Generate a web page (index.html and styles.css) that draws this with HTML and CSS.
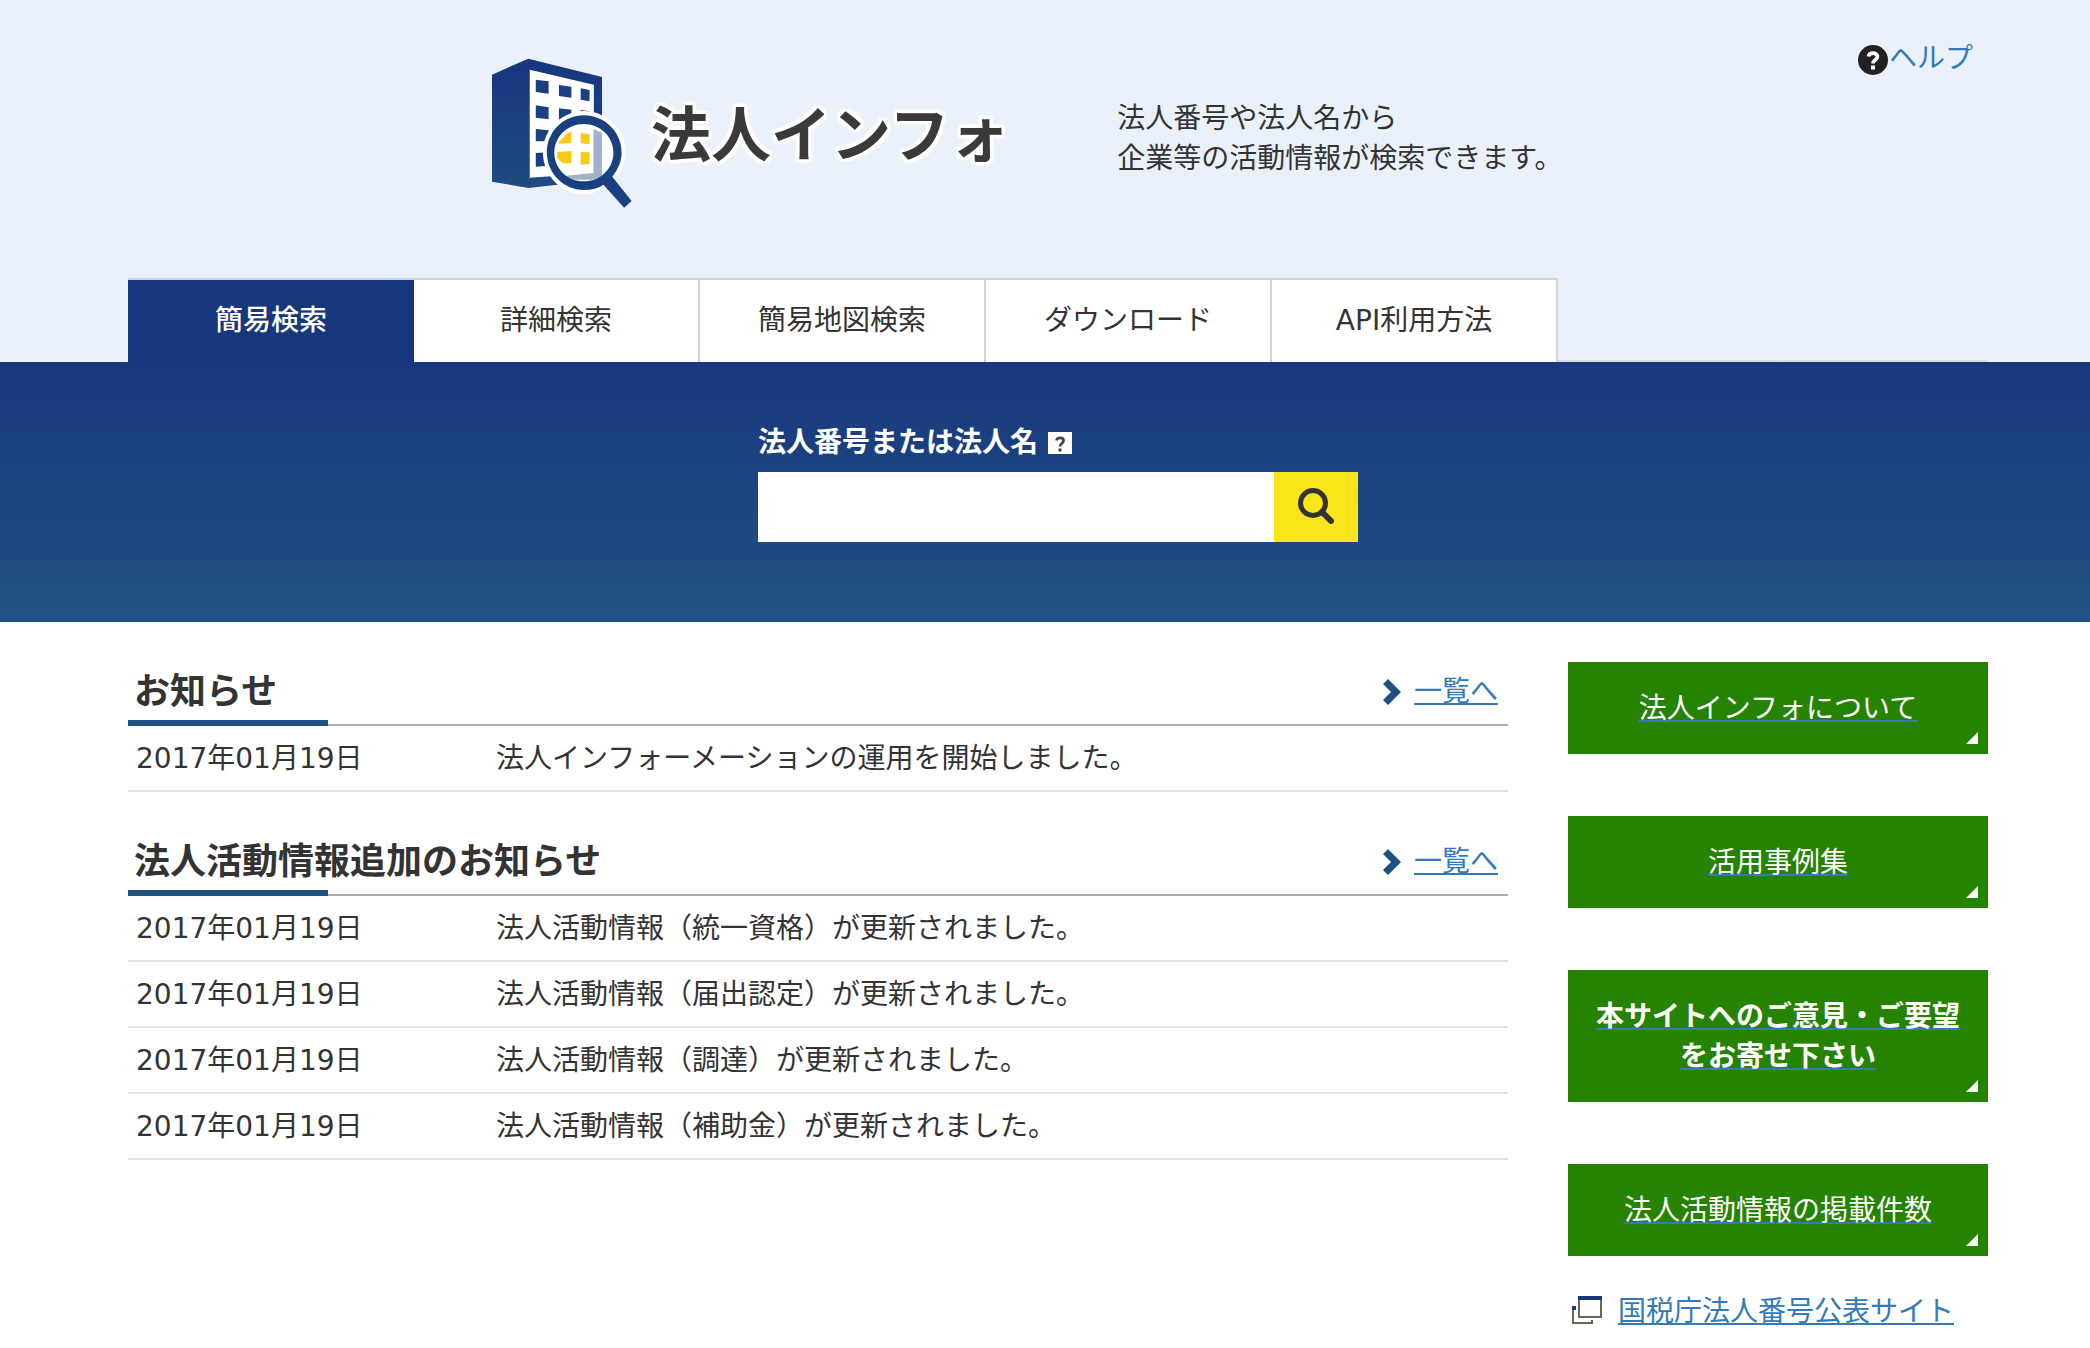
FILE: index.html
```html
<!DOCTYPE html>
<html lang="ja">
<head>
<meta charset="utf-8">
<meta name="viewport" content="width=device-width, initial-scale=1">
<title>法人インフォ</title>
<link rel="stylesheet" href="styles.css">
</head>
<body>
<header class="site-header">
  <div class="header-top">
    <a class="logo" href="#">
      <svg class="logo-mark" viewBox="62 52 396 456" preserveAspectRatio="none" aria-hidden="true">
        <defs>
          <linearGradient id="navy" x1="0" y1="0" x2="0" y2="1">
            <stop offset="0.1" stop-color="#18377f"/>
            <stop offset="1" stop-color="#1d4c80"/>
          </linearGradient>
          <clipPath id="lens"><ellipse cx="320" cy="339" rx="84" ry="86"/></clipPath>
        </defs>
        <path fill="url(#navy)" d="M62 105 L164 57 L371 112 V420 L164 445 L62 426 Z"/>
        <path fill="#fff" d="M168 90 L348 135 V401 L168 414 Z"/>
        <g fill="#1a407f">
          <path d="M185 120 L221 125 V162 L185 157 Z"/>
          <path d="M250 136 L285 141 V174 L250 169 Z"/>
          <path d="M311 146 L336 151 V185 L311 180 Z"/>
          <path d="M185 197 L221 203 V239 L185 234 Z"/>
          <path d="M250 206 L285 210 V244 L250 239 Z"/>
          <path d="M311 211 L336 215 V250 L311 246 Z"/>
          <path d="M185 268 L221 272 V305 L185 305 Z"/>
          <path d="M185 340 L221 338 V378 L185 381 Z"/>
        </g>
        <path fill="#fff" d="M320 214 C382 214 437 268 437 338 C437 368 428 392 412 410 L402 424 L374 444 C358 456 340 464 320 464 C258 464 205 410 205 338 C205 268 260 214 320 214 Z"/>
        <path fill="#eaf1fb" d="M372 445 L420 414 L450 460 L400 480 Z"/>
        <g clip-path="url(#lens)">
          <path fill="#a3b2ca" d="M347 268 L371 280 V420 H270 V408 L347 400 Z"/>
          <path fill="#f9cb15" d="M250 306 L275 280 L285 276 V310 L250 312 Z M311 280 L336 284 V314 L311 311 Z M245 337 L285 334 V371 L260 371 L245 355 Z M311 337 L336 338 V373 L311 375 Z"/>
        </g>
        <path fill="#1a407f" fill-rule="evenodd" d="M320 227 C378 227 426 277 426 338 C426 366 416 389 400 411 L454 484 L433 504 L375 435 C360 446 341 451 320 451 C262 451 216 400 216 338 C216 277 262 227 320 227 Z M320 253 C274 253 237 291 237 339 C237 387 274 425 320 425 C366 425 403 387 403 339 C403 291 366 253 320 253 Z"/>
      </svg>
      <span class="logo-text">法人インフォ</span>
    </a>
    <p class="tagline">法人番号や法人名から<br>企業等の活動情報が検索できます。</p>
    <a class="help" href="#">
      <svg class="help-icon" viewBox="0 0 30 30" aria-hidden="true">
        <circle cx="15" cy="15" r="15" fill="#222"/>
        <path d="M10.500 11.500 C11 7 19.500 7 19.500 11.500 C19.500 15 15 14.500 15 18.500" fill="none" stroke="#fff" stroke-width="3.600"/>
        <rect x="13" y="20.500" width="4" height="4" fill="#fff"/>
      </svg><span>ヘルプ</span>
    </a>
  </div>
  <nav class="tabs" aria-label="メニュー">
    <a class="tab tab-current" href="#" aria-current="page">簡易検索</a>
    <a class="tab" href="#">詳細検索</a>
    <a class="tab" href="#">簡易地図検索</a>
    <a class="tab" href="#">ダウンロード</a>
    <a class="tab" href="#">API利用方法</a>
  </nav>
</header>

<section class="hero">
  <form class="search">
    <div class="search-label">
      <label for="keyword">法人番号または法人名</label>
      <svg class="hint-icon" viewBox="0 0 24 22" aria-hidden="true">
        <rect width="24" height="22" fill="#fff"/>
        <path d="M8.500 8.500 C9 5 15.500 5 15.500 8.500 C15.500 11.500 12 11 12 14.500" fill="none" stroke="#444" stroke-width="2.800"/>
        <rect x="10.500" y="16.500" width="3" height="3" fill="#444"/>
      </svg>
    </div>
    <div class="search-box">
      <input class="search-input" id="keyword" type="text">
      <button class="search-button" type="submit" aria-label="検索">
        <svg class="search-icon" viewBox="0 0 36 36" aria-hidden="true">
          <circle cx="15" cy="15" r="12.500" fill="none" stroke="#333" stroke-width="5"/>
          <path d="M24 24 L33 33" stroke="#333" stroke-width="6" stroke-linecap="round"/>
        </svg>
      </button>
    </div>
  </form>
</section>

<main class="content">
  <div class="news">
    <section>
      <div class="section-head">
        <h2>お知らせ</h2>
        <a class="more" href="#">
          <svg class="chevron" viewBox="0 0 18 26" aria-hidden="true"><path fill="#1f5082" d="M5 0 L18 13 L5 26 L0 21 L8 13 L0 5 Z"/></svg>
          <span class="underlined">一覧へ</span>
        </a>
      </div>
      <table class="news-table">
        <tr><td class="date">2017年01月19日</td><td>法人インフォーメーションの運用を開始しました。</td></tr>
      </table>
    </section>
    <section>
      <div class="section-head">
        <h2>法人活動情報追加のお知らせ</h2>
        <a class="more" href="#">
          <svg class="chevron" viewBox="0 0 18 26" aria-hidden="true"><path fill="#1f5082" d="M5 0 L18 13 L5 26 L0 21 L8 13 L0 5 Z"/></svg>
          <span class="underlined">一覧へ</span>
        </a>
      </div>
      <table class="news-table">
        <tr><td class="date">2017年01月19日</td><td>法人活動情報（統一資格）が更新されました。</td></tr>
        <tr><td class="date">2017年01月19日</td><td>法人活動情報（届出認定）が更新されました。</td></tr>
        <tr><td class="date">2017年01月19日</td><td>法人活動情報（調達）が更新されました。</td></tr>
        <tr><td class="date">2017年01月19日</td><td>法人活動情報（補助金）が更新されました。</td></tr>
      </table>
    </section>
  </div>

  <aside class="side">
    <div class="side-buttons">
      <a class="side-button" href="#">法人インフォについて</a>
      <a class="side-button" href="#">活用事例集</a>
      <a class="side-button side-button-strong" href="#">本サイトへのご意見・ご要望<br>をお寄せ下さい</a>
      <a class="side-button" href="#">法人活動情報の掲載件数</a>
    </div>
    <a class="external" href="#">
      <svg class="external-icon" viewBox="0 0 30 28" aria-hidden="true">
        <path fill="none" stroke="#6b6558" stroke-width="2" d="M1 12 V27 H20 V24 M7 3 V21 H29 V3"/>
        <path fill="#18377f" d="M6 0 H30 V4 H6 Z M0 10 H4 V14 H0 Z"/>
      </svg>
      <span class="underlined">国税庁法人番号公表サイト</span>
    </a>
  </aside>
</main>
</body>
</html>
```
FILE: styles.css
```css
* {
  box-sizing: border-box;
}

body {
  margin: 0;
  background: #fff;
  color: #333;
  font-family: Verdana, "DejaVu Sans", "Noto Sans CJK JP", sans-serif;
  font-size: 28px;
  line-height: 40px;
}

h2,
p {
  margin: 0;
}

a {
  color: #337ab7;
  text-decoration: none;
}

svg {
  display: block;
  flex: none;
}

.underlined {
  text-decoration: underline;
  text-decoration-thickness: 2px;
  text-decoration-skip-ink: none;
  text-underline-offset: 2px;
}

/* Header */
.site-header {
  padding: 37px 102px 0 128px;
  background: #eaf1fb;
}

.header-top {
  display: flex;
  align-items: flex-start;
  padding: 0 15px 69px 364px;
}

.logo {
  display: flex;
  align-items: center;
  gap: 18px;
  margin-top: 20px;
}

.logo-mark {
  width: 141px;
  height: 152px;
}

.logo-text {
  padding-top: 6px;
  color: #3a3a3a;
  font-size: 60px;
  font-weight: 700;
  line-height: 80px;
  white-space: nowrap;
  text-shadow: 3px 0 2px #fff, -3px 0 2px #fff, 0 3px 2px #fff, 0 -3px 2px #fff,
    3px 3px 2px #fff, -3px 3px 2px #fff, 3px -3px 2px #fff, -3px -3px 2px #fff;
}

.tagline {
  margin: 62px 0 0 108px;
}

.help {
  display: flex;
  align-items: flex-end;
  gap: 1px;
  margin: 2px 0 0 auto;
  white-space: nowrap;
}

.help-icon {
  width: 30px;
  height: 30px;
  margin-bottom: 4px;
}

.tabs {
  display: flex;
}

.tabs::after {
  content: "";
  flex: 1;
  border-bottom: 2px solid #ddd;
}

.tab {
  width: 286px;
  padding: 21px 0;
  border-top: 2px solid #d0d2e0;
  border-right: 2px solid #d0d2e0;
  background: #fff;
  color: #333;
  text-align: center;
}

.tab-current {
  border-right: 0;
  background: #17377d;
  color: #fff;
  font-weight: 500;
}

/* Search */
.hero {
  padding: 61px 102px 80px 128px;
  background: linear-gradient(#18377f, #1f5282);
}

.search {
  display: flex;
  flex-direction: column;
  gap: 9px;
  max-width: 600px;
  margin: 0 auto;
}

.search-label {
  display: flex;
  align-items: center;
  gap: 10px;
  color: #fff;
  font-weight: 700;
}

.hint-icon {
  width: 24px;
  height: 22px;
}

.search-box {
  display: flex;
  height: 70px;
}

.search-input {
  flex: 1;
  min-width: 0;
  padding: 0 16px;
  border: 0;
  border-radius: 0;
  background: #fff;
  color: #333;
  font: inherit;
}

.search-button {
  display: grid;
  place-items: center;
  width: 84px;
  padding: 0 0 2px;
  border: 0;
  background: #fae51a;
}

.search-icon {
  width: 36px;
  height: 36px;
}

/* Content */
.content {
  display: grid;
  grid-template-columns: 1fr 420px;
  gap: 60px;
  padding: 40px 102px 15px 128px;
}

.news {
  display: flex;
  flex-direction: column;
  gap: 40px;
}

.section-head {
  position: relative;
  display: flex;
  align-items: center;
  justify-content: space-between;
  padding: 10px 10px 12px 6px;
  border-bottom: 2px solid #aaa;
}

.section-head::after {
  content: "";
  position: absolute;
  bottom: -2px;
  left: 0;
  width: 200px;
  height: 6px;
  background: #1f5082;
}

.section-head h2 {
  font-size: 36px;
  font-weight: 700;
  line-height: 40px;
}

.more {
  display: flex;
  align-items: center;
  gap: 13px;
}

.chevron {
  width: 18px;
  height: 26px;
}

.news-table {
  width: 100%;
  border-collapse: separate;
  border-spacing: 0;
}

.news-table td {
  padding: 13px 8px 11px;
  border-bottom: 2px solid #e3e3e3;
}

.news-table .date {
  width: 360px;
}

/* Side column */
.side {
  display: flex;
  flex-direction: column;
  gap: 36px;
}

.side-buttons {
  display: flex;
  flex-direction: column;
  gap: 62px;
}

.side-button {
  position: relative;
  padding: 27px 0 25px;
  background: #258300;
  color: #fff;
  text-align: center;
  text-decoration: underline #337ab7 2px;
  text-decoration-skip-ink: none;
  text-underline-offset: 2px;
}

.side-button::after {
  content: "";
  position: absolute;
  right: 10px;
  bottom: 10px;
  border-bottom: 12px solid #fff;
  border-left: 12px solid transparent;
}

.side-button-strong {
  font-weight: 700;
}

.external {
  display: flex;
  align-items: center;
  gap: 16px;
  padding-left: 4px;
}

.external-icon {
  width: 30px;
  height: 28px;
  margin-bottom: 4px;
}
```
